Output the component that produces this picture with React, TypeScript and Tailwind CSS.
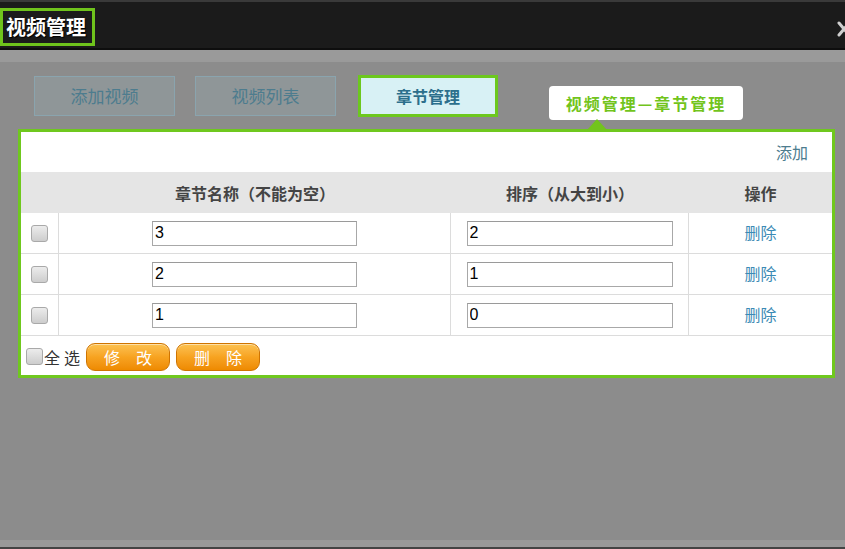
import React from "react";

const rows = [
  { id: 1, name: "3", sort: "2" },
  { id: 2, name: "2", sort: "1" },
  { id: 3, name: "1", sort: "0" },
];

const font = "font-['Microsoft_YaHei','Noto_Sans_CJK_SC',sans-serif]";

const Box = () => (
  <span className="inline-block w-[17px] h-[17px] rounded-[3px] border border-[#a9a9a9] bg-gradient-to-b from-[#ececec] to-[#cdcdcd]" />
);

const OrangeButton = ({ label }: { label: string }) => (
  <button className="w-[84px] h-[28px] rounded-[9px] border border-[#cf7400] bg-gradient-to-b from-[#fcc24f] via-[#f7a320] to-[#ee8a00] text-white text-[16px] tracking-[16px] pl-[16px] leading-none shadow-[inset_0_1px_0_rgba(255,255,255,0.5)]">
    {label}
  </button>
);

export default function App() {
  return (
    <div className={`w-[845px] h-[549px] flex flex-col bg-[#8c8c8c] overflow-hidden ${font}`}>
      {/* header */}
      <div className="relative h-[50px] bg-[#1b1b1b] border-t-[2px] border-t-[#3a3a3a] border-b-[2px] border-b-[#0e0e0e] flex items-center">
        <div className="h-[38px] w-[95px] border-[3px] border-[#6fc31c] flex items-center pl-[3px] mt-[4px]">
          <span className="text-white text-[20px] font-bold [text-shadow:1px_1px_1px_#000]">视频管理</span>
        </div>
        <svg className="absolute right-[-6px] top-[19px]" width="14" height="16" viewBox="0 0 14 16">
          <path d="M2 2 L12 14 M12 2 L2 14" stroke="#cfcfcf" strokeWidth="3" strokeLinecap="round" />
        </svg>
      </div>
      <div className="h-[12px] bg-[#9a9a9a]" />

      {/* body */}
      <div className="relative flex-1 flex flex-col">
        <div className="flex items-center pl-[34px] pt-[13px] h-[55px]">
          <div className="w-[141px] h-[40px] border border-[#8aa4ae] bg-[#8f9698] flex items-center justify-center text-[#4d7c8e] text-[17px]">
            添加视频
          </div>
          <div className="ml-[20px] w-[141px] h-[40px] border border-[#8aa4ae] bg-[#8f9698] flex items-center justify-center text-[#4d7c8e] text-[17px]">
            视频列表
          </div>
          <div className="ml-[22px] w-[140px] h-[42px] border-[3px] border-[#6cc81e] bg-[#d8f1f5] flex items-center justify-center text-[#2c6f8c] text-[16px] font-bold">
            章节管理
          </div>
        </div>

        {/* tooltip */}
        <div className="absolute left-[549px] top-[24px] w-[194px] h-[34px] bg-white rounded-[4px] flex items-center justify-center text-[#72c41c] text-[16px] font-bold tracking-[2px]">
          视频管理—章节管理
        </div>
        <div className="absolute left-[587px] top-[57px] w-0 h-0 border-l-[10px] border-r-[10px] border-b-[11px] border-l-transparent border-r-transparent border-b-[#72c41c]" />

        {/* panel */}
        <div className="ml-[18px] mt-[12px] w-[817px] h-[249px] border-[3px] border-[#6fc81e] bg-white flex flex-col">
          <div className="h-[40px] flex items-center justify-end pr-[24px] text-[#4d7c8e] text-[16px]">添加</div>
          <div className="grid grid-cols-[38px_392px_238px_143px] text-[16px]">
            <div className="h-[41px] bg-[#e5e5e5]" />
            <div className="h-[41px] bg-[#e5e5e5] flex items-center justify-center font-bold text-[#444]">章节名称（不能为空）</div>
            <div className="h-[41px] bg-[#e5e5e5] flex items-center justify-center font-bold text-[#444]">排序（从大到小）</div>
            <div className="h-[41px] bg-[#e5e5e5] flex items-center justify-center font-bold text-[#444]">操作</div>
            {rows.map((r) => (
              <React.Fragment key={r.id}>
                <div className="h-[41px] border-b border-[#dcdcdc] border-r flex items-center justify-center">
                  <Box />
                </div>
                <div className="h-[41px] border-b border-r border-[#dcdcdc] flex items-center justify-center">
                  <input
                    readOnly
                    value={r.name}
                    className="w-[205px] h-[25px] border border-[#a8a8a8] border-t-[#9a9a9a] px-[2px] text-[16px] text-black font-['Liberation_Sans',sans-serif] outline-none"
                  />
                </div>
                <div className="h-[41px] border-b border-r border-[#dcdcdc] flex items-center justify-center">
                  <input
                    readOnly
                    value={r.sort}
                    className="w-[206px] h-[25px] border border-[#a8a8a8] border-t-[#9a9a9a] px-[2px] text-[16px] text-black font-['Liberation_Sans',sans-serif] outline-none"
                  />
                </div>
                <div className="h-[41px] border-b border-[#dcdcdc] flex items-center justify-center pb-[3px] text-[#3b8bb5] text-[16px]">
                  删除
                </div>
              </React.Fragment>
            ))}
          </div>
          <div className="flex items-center h-[39px] pl-[5px] pt-[2px]">
            <Box />
            <span className="ml-[1px] text-[16px] text-[#333] tracking-[4px]">全选</span>
            <span className="ml-[2px]">
              <OrangeButton label="修改" />
            </span>
            <span className="ml-[6px]">
              <OrangeButton label="删除" />
            </span>
          </div>
        </div>
        <div className="flex-1" />
        <div className="h-[7px] bg-[#999]" />
        <div className="h-[2px] bg-[#444]" />
      </div>
    </div>
  );
}
